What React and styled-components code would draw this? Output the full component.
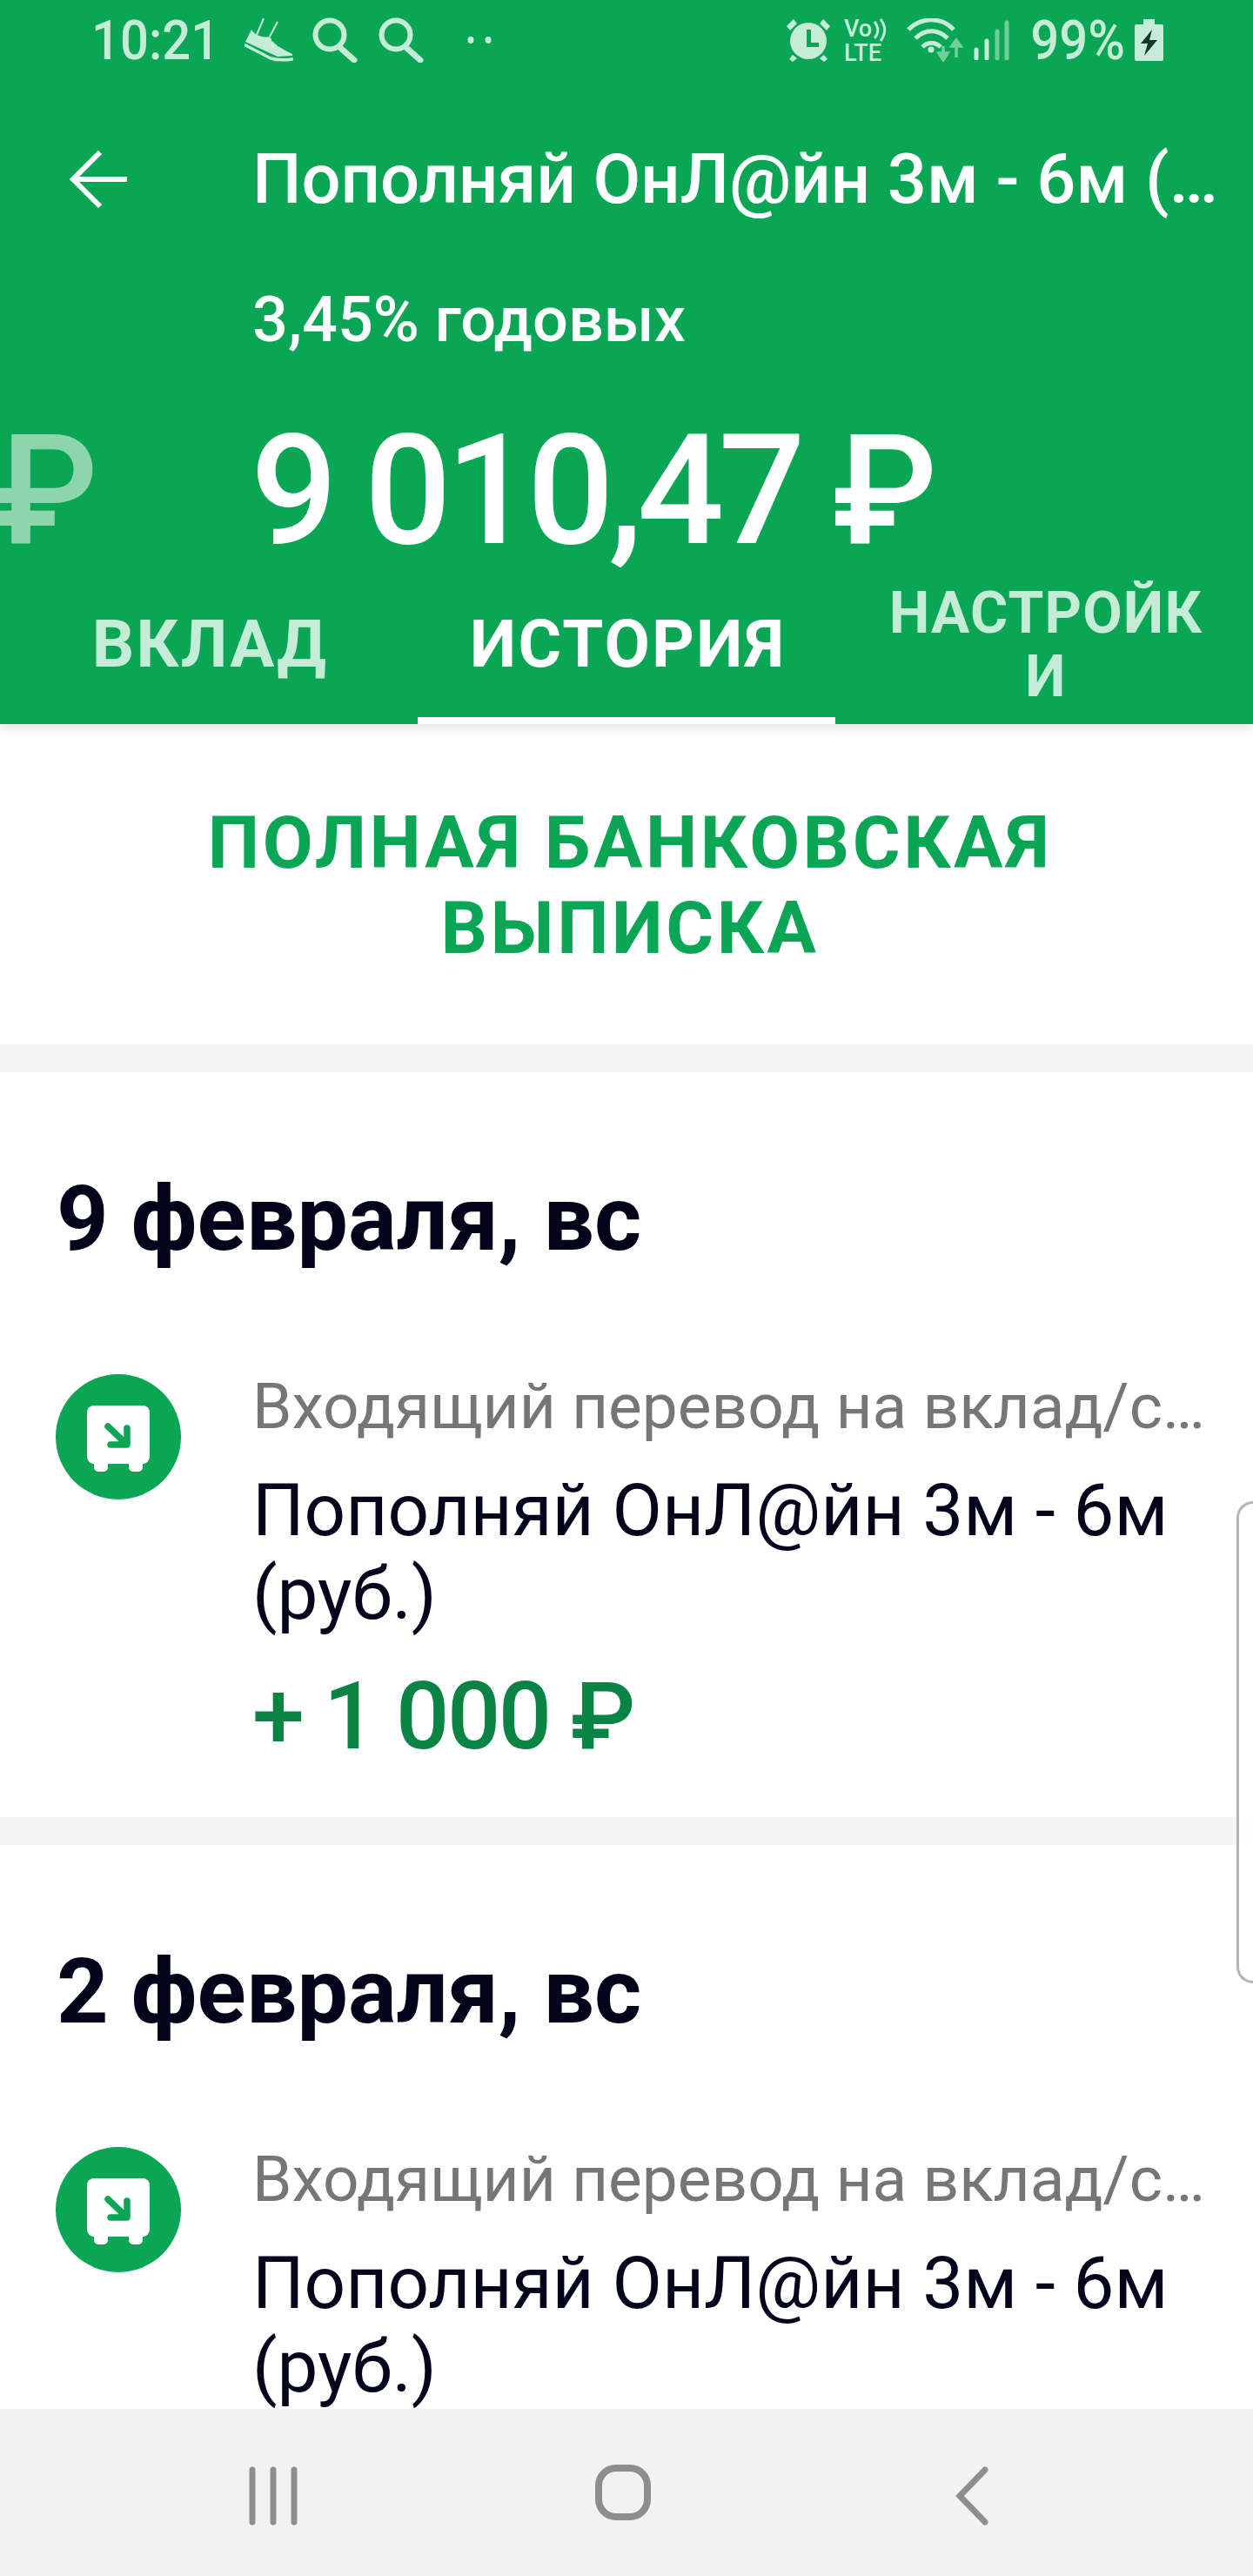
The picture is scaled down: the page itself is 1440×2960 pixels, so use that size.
import React from 'react';
import styled, { createGlobalStyle } from 'styled-components';

const GREEN = '#0aa655';
const PALE = '#c4ecd6';

const Global = createGlobalStyle`
    html, body {
        margin: 0;
        padding: 0;
        background: white;
    }

    * {
        box-sizing: border-box;
    }
`;

const Screen = styled.div`
    width: 1440px;
    height: 2960px;
    display: flex;
    flex-direction: column;
    position: relative;
    overflow: hidden;
    font-family: Roboto, 'Noto Sans', sans-serif;
    background: #f5f5f5;
`;

const Header = styled.header`
    background: ${GREEN};
    height: 832px;
    flex-shrink: 0;
    position: relative;
    z-index: 2;
    box-shadow: 0 4px 14px rgba(0, 0, 0, 0.12);
    display: flex;
    flex-direction: column;
`;

const StatusBar = styled.div`
    height: 98px;
    padding: 0 103px 0 105px;
    display: flex;
    justify-content: space-between;
    align-items: center;
    color: ${PALE};
`;

const StatusGroup = styled.div`
    display: flex;
    align-items: center;
`;

const StatusItem = styled.div`
    display: flex;
    margin-left: ${(p) => p.$gap || 0}px;
`;

const StatusText = styled.span`
    font-size: 58px;
    line-height: 60px;
    font-weight: 500;
    transform: scaleY(1.08);
`;

const Toolbar = styled.div`
    height: 112px;
    margin-top: 60px;
    display: flex;
    align-items: center;
`;

const BackSlot = styled.div`
    width: 290px;
    padding-left: 80px;
    display: flex;
    flex-shrink: 0;
`;

const Title = styled.div`
    width: 1140px;
    font-size: 79.5px;
    font-weight: 500;
    color: white;
    white-space: nowrap;
    overflow: hidden;
    text-overflow: ellipsis;
`;

const Rate = styled.div`
    margin: 73px 0 0 290px;
    height: 72px;
    line-height: 72px;
    font-size: 72px;
    font-weight: 500;
    color: white;
`;

const AmountRow = styled.div`
    position: relative;
    margin-top: 72px;
    height: 176px;
    padding-left: 288px;
    font-size: 176px;
    line-height: 176px;
    font-weight: 500;
    letter-spacing: -6.5px;
    color: white;
    white-space: nowrap;
`;

const GhostRuble = styled.span`
    position: absolute;
    left: -8px;
    top: 0;
    color: #8dd5ac;
`;

const Tabs = styled.div`
    margin-top: auto;
    height: 190px;
    display: grid;
    grid-template-columns: repeat(3, 480px);
`;

const Tab = styled.div`
    display: flex;
    align-items: center;
    justify-content: center;
    text-align: center;
    font-weight: 700;
    letter-spacing: ${(p) => (p.$small ? 1.2 : 2.2)}px;
    font-size: ${(p) => (p.$small ? 66 : 76)}px;
    line-height: ${(p) => (p.$small ? 73 : 84)}px;
    color: ${(p) => (p.$active ? 'white' : PALE)};
    border-bottom: 8px solid ${(p) => (p.$active ? 'white' : 'transparent')};
    padding: ${(p) => (p.$small ? '6px 50px 0 54px' : '4px 0 0 3px')};
    word-break: break-all;
`;

const Feed = styled.main`
    flex: 1;
    min-height: 0;
    overflow: hidden;
    display: flex;
    flex-direction: column;
    gap: 32px;
`;

const StatementButton = styled.div`
    background: white;
    height: 368px;
    flex-shrink: 0;
    padding: 4px 176px 0 184px;
    display: flex;
    align-items: center;
    justify-content: center;
    text-align: center;
    font-size: 84px;
    line-height: 98px;
    font-weight: 700;
    letter-spacing: 3.5px;
    color: ${GREEN};
`;

const Card = styled.section`
    background: white;
    height: 856px;
    flex-shrink: 0;
    padding: 107px 0 0 65px;
`;

const DateTitle = styled.h2`
    margin: 0;
    font-size: 104px;
    line-height: 124px;
    font-weight: 700;
    color: #03031c;
`;

const Operation = styled.div`
    margin-top: 107px;
    display: flex;
    gap: 82px;
`;

const IconCircle = styled.svg`
    width: 144px;
    height: 144px;
    margin: 9px 0 0 -1px;
    flex-shrink: 0;
`;

const OperationText = styled.div`
    width: 1110px;
`;

const OperationKind = styled.div`
    font-size: 73px;
    line-height: 92px;
    color: #767676;
    white-space: nowrap;
    overflow: hidden;
    text-overflow: ellipsis;
`;

const OperationName = styled.div`
    margin-top: 26px;
    font-size: 83.5px;
    line-height: 96px;
    color: #03031c;
`;

const OperationSum = styled.div`
    margin-top: 30px;
    font-size: 108px;
    line-height: 124px;
    font-weight: 500;
    letter-spacing: -2.5px;
    color: #0a8444;
`;

const EdgeHandle = styled.div`
    position: absolute;
    z-index: 3;
    top: 1725px;
    right: 0;
    width: 19px;
    height: 554px;
    background: rgba(255, 255, 255, 0.85);
    border: 3px solid #b5b5b5;
    border-right: none;
    border-radius: 20px 0 0 20px;
`;

const NavBar = styled.nav`
    background: #f2f2f2;
    height: 192px;
    flex-shrink: 0;
    position: relative;
    z-index: 2;
`;

const NavIcons = styled.svg`
    display: block;
    width: 1440px;
    height: 192px;
`;

const Shoe = () => (
    <svg width="56" height="50" viewBox="0 0 56 50" fill="currentColor">
        <path d="M22 0 L14 19 M38 4 L29 21" stroke="currentColor" strokeWidth="2" fill="none" />
        <path d="M1 27 L8 13 C12 20 22 23 29 21 C33 30 44 36 55 41 L55 43 L38 44 Z" />
        <path d="M31 26 L35 24 M35 29 L39 27 M38 32 L42 30" stroke={GREEN} strokeWidth="1.5" />
        <path d="M1 31 L30 46 C38 48.5 48 48 55 47" stroke="currentColor" strokeWidth="3.5" fill="none" strokeLinecap="round" />
    </svg>
);

const Search = () => (
    <svg width="52" height="52" viewBox="0 0 52 52" fill="none" stroke="currentColor">
        <circle cx="20" cy="20" r="16.5" strokeWidth="6" />
        <path d="M31 34 L48 49" strokeWidth="7" strokeLinecap="round" />
    </svg>
);

const Dots = () => (
    <svg width="28" height="10" viewBox="0 0 28 10" fill="currentColor">
        <ellipse cx="4" cy="5" rx="3.5" ry="4" />
        <ellipse cx="24" cy="5" rx="3.5" ry="4" />
    </svg>
);

const Alarm = () => (
    <svg width="52" height="50" viewBox="0 0 52 50" fill="currentColor">
        <circle cx="26" cy="26" r="21" />
        <path d="M1 9 L9 1 L13 6 L5 14 Z M51 9 L43 1 L39 6 L47 14 Z M8 42 L13 46 L8 50 L4 47 Z M44 42 L39 46 L44 50 L48 47 Z" />
        <path d="M24 13 H29 V28 H38 V33 H24 Z" fill={GREEN} />
    </svg>
);

const VoLte = () => (
    <svg width="50" height="50" viewBox="0 0 50 50" fill="currentColor" fontFamily="Roboto, sans-serif" fontWeight="500">
        <text x="0" y="21" fontSize="27">Vo</text>
        <path d="M35 4 C40 10 40 17 35 23 M42 1 C48 9 48 18 42 26" fill="none" stroke="currentColor" strokeWidth="3" />
        <text x="0" y="49" fontSize="27">LTE</text>
    </svg>
);

const Wifi = () => (
    <svg width="66" height="50" viewBox="0 0 66 50" fill="none" stroke="currentColor" strokeWidth="5">
        <path d="M2 13 C17 -2 40 -2 54 13" />
        <path d="M10 23 C21 12 36 12 47 23" />
        <path d="M18 33 C24 27 33 27 39 33" />
        <circle cx="28" cy="36" r="3.5" fill="currentColor" stroke="none" />
        <path d="M42 32 V44 M37 40 L42 48 L47 40 Z M57 45 V28 M52 32 L57 25 L62 32 Z" stroke="#6fcf9c" strokeWidth="3.5" fill="#6fcf9c" />
    </svg>
);

const Signal = () => (
    <svg width="42" height="46" viewBox="0 0 42 46" fill="none" strokeWidth="5" strokeLinecap="round">
        <path d="M3 34 V44" stroke="currentColor" />
        <path d="M15 24 V44" stroke="currentColor" />
        <path d="M27 13 V44" stroke="#6fcf9c" />
        <path d="M38 3 V44" stroke="#6fcf9c" />
    </svg>
);

const Battery = () => (
    <svg width="33" height="48" viewBox="0 0 33 48" fill="currentColor">
        <path d="M10 0 H23 V6 H31 Q33 6 33 8 V46 Q33 48 31 48 H2 Q0 48 0 46 V8 Q0 6 2 6 H10 Z" />
        <path d="M20 12 L7 28 H15 L11 42 L26 24 H17 Z" fill="#0e3a24" />
    </svg>
);

const BackArrow = () => (
    <svg width="68" height="66" viewBox="0 0 68 66" fill="none" stroke="white" strokeWidth="6">
        <path d="M4 33 H66 M35 2 L4 33 L35 64" />
    </svg>
);

const DepositIcon = () => (
    <IconCircle viewBox="0 0 144 144">
        <circle cx="72" cy="72" r="72" fill={GREEN} />
        <rect x="36" y="36" width="72" height="67" rx="8" fill="white" />
        <rect x="44" y="90" width="16" height="22" rx="5" fill="white" />
        <rect x="84" y="90" width="16" height="22" rx="5" fill="white" />
        <path d="M60 60 L81 80 M82 62 V81 H63" fill="none" stroke={GREEN} strokeWidth="7.5" strokeLinecap="round" strokeLinejoin="round" />
    </IconCircle>
);

const Day = ({ date }) => (
    <Card>
        <DateTitle>{date}</DateTitle>
        <Operation>
            <DepositIcon />
            <OperationText>
                <OperationKind>Входящий перевод на вклад/счёт</OperationKind>
                <OperationName>Пополняй ОнЛ@йн 3м - 6м (руб.)</OperationName>
                <OperationSum>+ 1 000 ₽</OperationSum>
            </OperationText>
        </Operation>
    </Card>
);

export default function App() {
    return (
        <Screen>
            <Global />
            <Header>
                <StatusBar>
                    <StatusGroup>
                        <StatusText>10:21</StatusText>
                        <StatusItem $gap={29}><Shoe /></StatusItem>
                        <StatusItem $gap={22}><Search /></StatusItem>
                        <StatusItem $gap={24}><Search /></StatusItem>
                        <StatusItem $gap={50}><Dots /></StatusItem>
                    </StatusGroup>
                    <StatusGroup>
                        <Alarm />
                        <StatusItem $gap={15}><VoLte /></StatusItem>
                        <StatusItem $gap={22}><Wifi /></StatusItem>
                        <StatusItem $gap={11}><Signal /></StatusItem>
                        <StatusItem $gap={23}><StatusText>99%</StatusText></StatusItem>
                        <StatusItem $gap={11}><Battery /></StatusItem>
                    </StatusGroup>
                </StatusBar>
                <Toolbar>
                    <BackSlot>
                        <BackArrow />
                    </BackSlot>
                    <Title>Пополняй ОнЛ@йн 3м - 6м (руб.)</Title>
                </Toolbar>
                <Rate>3,45% годовых</Rate>
                <AmountRow>
                    <GhostRuble>₽</GhostRuble>9 010,47 ₽
                </AmountRow>
                <Tabs>
                    <Tab>ВКЛАД</Tab>
                    <Tab $active>ИСТОРИЯ</Tab>
                    <Tab $small>НАСТРОЙКИ</Tab>
                </Tabs>
            </Header>
            <Feed>
                <StatementButton>ПОЛНАЯ БАНКОВСКАЯ ВЫПИСКА</StatementButton>
                <Day date="9 февраля, вс" />
                <Day date="2 февраля, вс" />
            </Feed>
            <EdgeHandle />
            <NavBar>
                <NavIcons viewBox="0 0 1440 192">
                    <g stroke="#8e8e8e" strokeLinecap="round" fill="none">
                        <path d="M290 70 V130 M314 70 V130 M338 70 V130" strokeWidth="7" />
                        <rect x="688" y="68" width="56" height="56" rx="20" strokeWidth="8" />
                        <path d="M1132 70 L1103 100 L1132 130" strokeWidth="7" />
                    </g>
                </NavIcons>
            </NavBar>
        </Screen>
    );
}
